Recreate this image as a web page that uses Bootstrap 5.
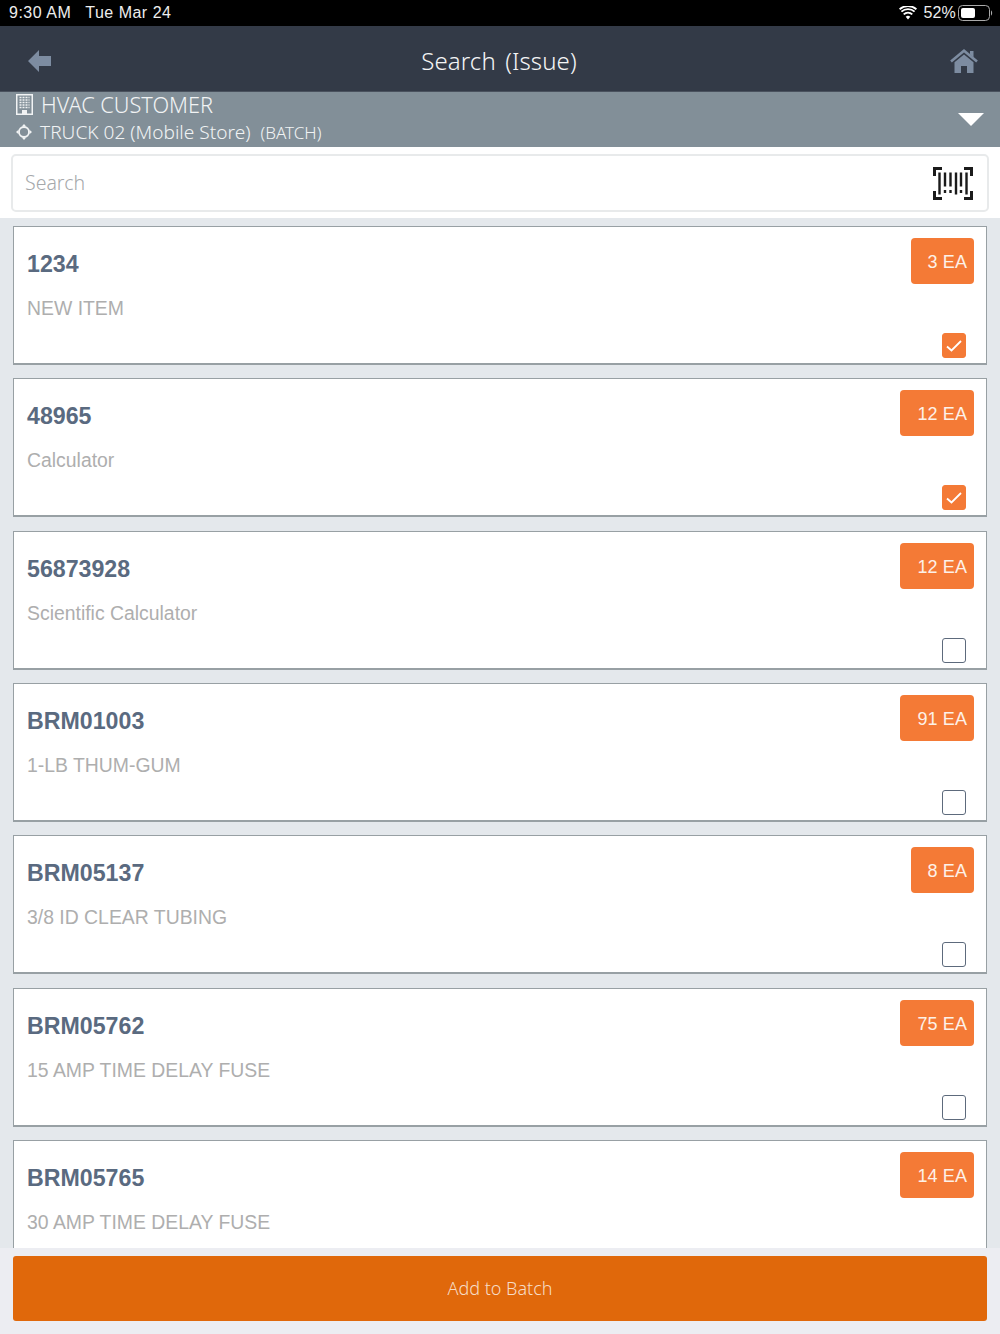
<!DOCTYPE html>
<html lang="en">
<head>
<meta charset="utf-8">
<title>Search (Issue)</title>
<link href="https://cdn.jsdelivr.net/npm/bootstrap@5.3.0/dist/css/bootstrap.min.css" rel="stylesheet">
<style>
html,body{margin:0;height:1334px;overflow:hidden;background:#e4e8ec;font-family:"Liberation Sans",Arial,sans-serif}
.app-shell{height:1334px}
.status-strip,.title-strip,.ctx-strip,.search-zone{flex:none}
.status-strip{height:26px;background:#000;color:#eee;font-size:16px;padding:0 7px 0 9px;line-height:26px;letter-spacing:.5px}
.status-strip .date-txt{margin-left:14px}
.status-pct{margin:0 2px 0 6px;letter-spacing:.2px}
.title-strip{height:66px;background:#333a47;border-bottom:1px solid #4a525e;padding:4px 22px 0 28px}
.title-txt{font-family:"Noto Sans",sans-serif;font-weight:300;font-size:24px;color:#f4f5f6;letter-spacing:.1px;word-spacing:3px;margin-right:4px}
.ctx-strip{height:55px;background:#828f98;color:#f1f3f4;padding:0 16px}
.ctx-left{margin-top:-2px}
.ctx-one{font-family:"Noto Sans",sans-serif;font-weight:300;font-size:21.700px;line-height:26px;height:27px}
.ctx-two{font-family:"Noto Sans",sans-serif;font-weight:300;font-size:19.100px;line-height:27px;height:28px}
.ctx-two .tag-txt{margin-left:5px;font-size:17px}
.search-zone{height:72px;background:#fff;padding:7px 11px;border-bottom:1px solid #e4e8ec}
.search-box{height:58px;border:2px solid #e8eaeb;border-radius:5px;padding:0 14px 0 12px;background:#fff}
.search-hint{font-family:"Noto Sans",sans-serif;font-weight:300;font-size:19.500px;color:#a5a8ab}
.list-zone{padding:7px 13px 0;overflow:hidden;min-height:0}
.stock-card{height:139px;margin-bottom:13.33px;background:#fff;border:1px solid #98a0a4;border-bottom-width:2px;border-radius:0;padding:11px 12px 5px 12px;flex:none}
.stock-code{font-size:23.200px;font-weight:700;color:#5a6a80;line-height:27px;margin-top:13px;margin-left:1px}
.stock-name{font-size:19.400px;color:#aeaeae;line-height:24px;margin-top:18px;margin-left:1px}
.qty-tag{height:46px;background:#f47a36;color:#fdf1e8;border-radius:4px;font-size:18px;line-height:48px;padding:0 7px 0 17px;letter-spacing:.1px}
.tick-box{width:24px;height:25px;border-radius:3px;margin-right:8px;border:1.5px solid #5d6a7c;background:#fff}
.tick-box.is-on{background:#f47a36;border-color:#f47a36}
.action-zone{height:86px;background:#ecedf2;padding:8px 13px 13px;flex:none}
.batch-btn{height:65px;width:100%;background:#e0680b;border:0;border-radius:3px;color:#f6dcc6;font-family:"Noto Sans",sans-serif;font-weight:300;font-size:18px}
.batch-btn:hover{background:#e0680b;color:#f6dcc6}
</style>
</head>
<body>
<div class="app-shell d-flex flex-column">
  <div class="status-strip d-flex justify-content-between align-items-center">
    <div><span>9:30 AM</span><span class="date-txt">Tue Mar 24</span></div>
    <div class="d-flex align-items-center">
      <svg width="18" height="14" viewBox="0 0 18 14"><path d="M9 13.500l-2.300-2.800a3.400 3.400 0 0 1 4.600 0z" fill="#fff"/><path d="M4.700 8.400a6.400 6.400 0 0 1 8.600 0M2.400 5.600a10 10 0 0 1 13.200 0M.6 3.200a13 13 0 0 1 16.800 0" stroke="#fff" stroke-width="1.900" fill="none"/></svg>
      <span class="status-pct">52%</span>
      <svg width="35" height="16" viewBox="0 0 35 16"><rect x=".5" y=".5" width="31" height="15" rx="4" fill="none" stroke="#aaa"/><rect x="3" y="3" width="14" height="10" rx="2" fill="#fff"/><path d="M33 5.500c1.500.4 1.500 4.600 0 5z" fill="#aaa"/></svg>
    </div>
  </div>
  <div class="title-strip d-flex justify-content-between align-items-center">
    <svg width="24" height="24" viewBox="0 0 24 24"><path d="M0 12L11 1v6h12v10H11v6z" fill="#7d8ca1"/></svg>
    <div class="title-txt">Search (Issue)</div>
    <svg width="28" height="24" viewBox="0 0 28 24"><path d="M1 12.500L14 1.800l13 10.700" fill="none" stroke="#7d8ca1" stroke-width="2.600"/><path d="M20 2h3.500v6.500L20 5.500z" fill="#7d8ca1"/><path d="M14 5.500L4.500 13.300V24H11v-7h6v7h6.500V13.300z" fill="#7d8ca1"/></svg>
  </div>
  <div class="ctx-strip d-flex justify-content-between align-items-center">
    <div class="ctx-left">
      <div class="ctx-one d-flex align-items-center gap-2">
        <svg width="17" height="21" viewBox="0 0 17 21"><rect x=".75" y=".75" width="15.500" height="19.500" fill="none" stroke="#f1f3f4" stroke-width="1.500"/><path d="M3.500 3.500h10M3.500 6h10M3.500 8.500h10M3.500 11h10M3.500 13.500h10" stroke="#f1f3f4" stroke-width="1.300" stroke-dasharray="2 1"/><rect x="6" y="16" width="5" height="4" fill="#f1f3f4"/></svg>
        <span>HVAC CUSTOMER</span>
      </div>
      <div class="ctx-two d-flex align-items-center gap-2">
        <svg width="16" height="16" viewBox="0 0 16 16"><circle cx="8" cy="8" r="5" fill="none" stroke="#f1f3f4" stroke-width="1.800"/><path d="M8 0l2.300 2.500H5.700zM8 16l-2.300-2.500h4.600zM0 8l2.500-2.300v4.600zM16 8l-2.500 2.300V5.700z" fill="#f1f3f4"/></svg>
        <span>TRUCK 02 (Mobile Store) <span class="tag-txt">(BATCH)</span></span>
      </div>
    </div>
    <svg width="26" height="13" viewBox="0 0 26 13"><path d="M0 0h26L13 13z" fill="#fff"/></svg>
  </div>
  <div class="search-zone">
    <div class="search-box d-flex justify-content-between align-items-center">
      <span class="search-hint">Search</span>
      <svg width="40" height="33" viewBox="0 0 40 33" fill="none" stroke="#1b1b1b"><path d="M1.500 9V1.500H9M31 1.500h7.500V9M1.500 24v7.500H9M31 31.500h7.500V24" stroke-width="3"/><path d="M6.500 5.500v22M23 5.500v22M33.500 5.500v22" stroke-width="2.400"/><path d="M12 5.500v14M17.500 5.500v14M28 5.500v14" stroke-width="2.400"/><path d="M12 23v3M17.500 23v3M28 23v3" stroke-width="2.400"/></svg>
    </div>
  </div>
  <div class="list-zone flex-grow-1">
    <div class="stock-card d-flex justify-content-between">
      <div><div class="stock-code">1234</div><div class="stock-name">NEW ITEM</div></div>
      <div class="d-flex flex-column justify-content-between align-items-end"><div class="qty-tag">3 EA</div><div class="tick-box is-on d-flex align-items-center justify-content-center"><svg width="16" height="12" viewBox="0 0 16 12"><path d="M1 6.500l4.500 4L15 1" fill="none" stroke="#fff" stroke-width="1.800"/></svg></div></div>
    </div>
    <div class="stock-card d-flex justify-content-between">
      <div><div class="stock-code">48965</div><div class="stock-name">Calculator</div></div>
      <div class="d-flex flex-column justify-content-between align-items-end"><div class="qty-tag">12 EA</div><div class="tick-box is-on d-flex align-items-center justify-content-center"><svg width="16" height="12" viewBox="0 0 16 12"><path d="M1 6.500l4.500 4L15 1" fill="none" stroke="#fff" stroke-width="1.800"/></svg></div></div>
    </div>
    <div class="stock-card d-flex justify-content-between">
      <div><div class="stock-code">56873928</div><div class="stock-name">Scientific Calculator</div></div>
      <div class="d-flex flex-column justify-content-between align-items-end"><div class="qty-tag">12 EA</div><div class="tick-box"></div></div>
    </div>
    <div class="stock-card d-flex justify-content-between">
      <div><div class="stock-code">BRM01003</div><div class="stock-name">1-LB THUM-GUM</div></div>
      <div class="d-flex flex-column justify-content-between align-items-end"><div class="qty-tag">91 EA</div><div class="tick-box"></div></div>
    </div>
    <div class="stock-card d-flex justify-content-between">
      <div><div class="stock-code">BRM05137</div><div class="stock-name">3/8 ID CLEAR TUBING</div></div>
      <div class="d-flex flex-column justify-content-between align-items-end"><div class="qty-tag">8 EA</div><div class="tick-box"></div></div>
    </div>
    <div class="stock-card d-flex justify-content-between">
      <div><div class="stock-code">BRM05762</div><div class="stock-name">15 AMP TIME DELAY FUSE</div></div>
      <div class="d-flex flex-column justify-content-between align-items-end"><div class="qty-tag">75 EA</div><div class="tick-box"></div></div>
    </div>
    <div class="stock-card d-flex justify-content-between">
      <div><div class="stock-code">BRM05765</div><div class="stock-name">30 AMP TIME DELAY FUSE</div></div>
      <div class="d-flex flex-column justify-content-between align-items-end"><div class="qty-tag">14 EA</div><div class="tick-box invisible"></div></div>
    </div>
  </div>
  <div class="action-zone"><button type="button" class="btn batch-btn">Add to Batch</button></div>
</div>
<script src="https://cdn.jsdelivr.net/npm/bootstrap@5.3.0/dist/js/bootstrap.bundle.min.js"></script>
</body>
</html>
